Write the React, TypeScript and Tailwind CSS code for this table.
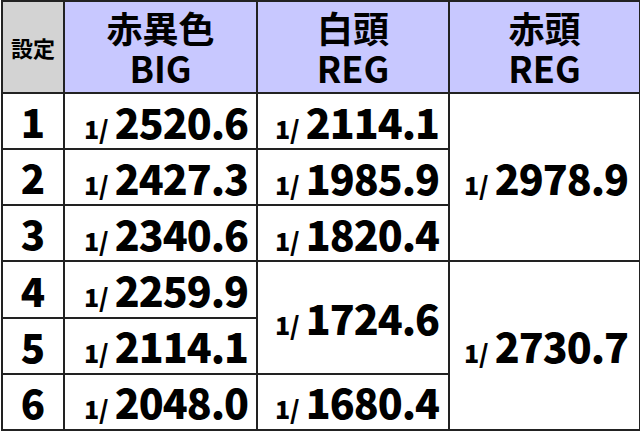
const rows: { s: string; big: string; white?: { v: string; span: number }; red?: { v: string; span: number } }[] = [
  { s: '1', big: '2520.6', white: { v: '2114.1', span: 1 }, red: { v: '2978.9', span: 3 } },
  { s: '2', big: '2427.3', white: { v: '1985.9', span: 1 } },
  { s: '3', big: '2340.6', white: { v: '1820.4', span: 1 } },
  { s: '4', big: '2259.9', white: { v: '1724.6', span: 2 }, red: { v: '2730.7', span: 3 } },
  { s: '5', big: '2114.1' },
  { s: '6', big: '2048.0', white: { v: '1680.4', span: 1 } },
];

function Prob({ v }: { v: string }) {
  return (
    <span className="whitespace-nowrap">
      <span className="text-[25px] mr-[6px]">1/</span>
      <span className="text-[41px] tracking-[-1px]">{v}</span>
    </span>
  );
}

const cell = 'border-2 border-[#222]';

export default function App() {
  return (
    <div
      className="w-[640px] h-[432px] bg-white text-black font-black leading-none"
      style={{ fontFamily: '"Noto Sans CJK JP", "Noto Sans", sans-serif' }}
    >
      <table className="table-fixed border-collapse w-[638px] h-[431px] ml-[1px]">
        <colgroup>
          <col className="w-[62px]" />
          <col className="w-[193px]" />
          <col className="w-[192px]" />
          <col className="w-[191px]" />
        </colgroup>
        <thead>
          <tr className="h-[92px]">
            <th className={`${cell} bg-[#d3d3d3] text-[22px]`}>設定</th>
            <th className={`${cell} bg-[#c8c8ff] text-[36px] leading-[40px]`}>
              <div>赤異色</div>
              <div>BIG</div>
            </th>
            <th className={`${cell} bg-[#c8c8ff] text-[36px] leading-[40px]`}>
              <div>白頭</div>
              <div>REG</div>
            </th>
            <th className={`${cell} bg-[#c8c8ff] text-[36px] leading-[40px]`}>
              <div>赤頭</div>
              <div>REG</div>
            </th>
          </tr>
        </thead>
        <tbody>
          {rows.map((r) => (
            <tr key={r.s} className="h-[56px]">
              <td className={`${cell} text-center text-[40px]`}>{r.s}</td>
              <td className={`${cell} text-right pr-[8px]`}>
                <Prob v={r.big} />
              </td>
              {r.white && (
                <td rowSpan={r.white.span} className={`${cell} text-right pr-[9px]`}>
                  <Prob v={r.white.v} />
                </td>
              )}
              {r.red && (
                <td rowSpan={r.red.span} className={`${cell} text-right pr-[11px]`}>
                  <Prob v={r.red.v} />
                </td>
              )}
            </tr>
          ))}
        </tbody>
      </table>
    </div>
  );
}
